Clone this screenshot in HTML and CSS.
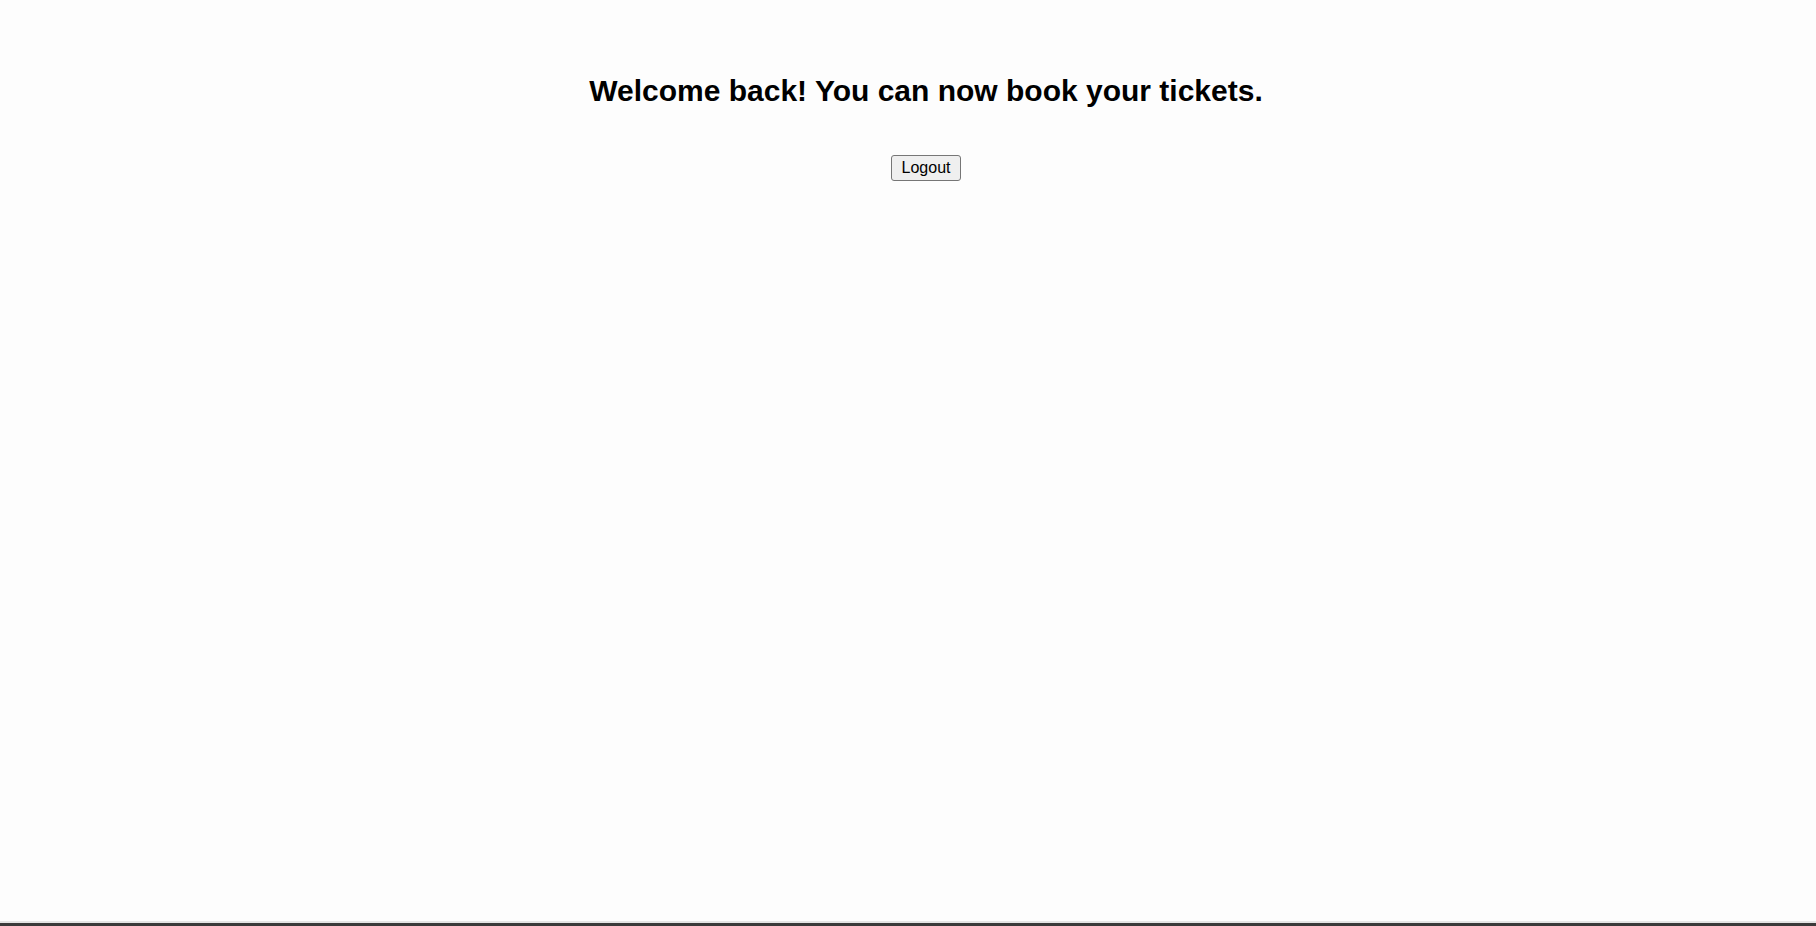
FILE: index.html
```html
<!DOCTYPE html>
<html lang="en">
<head>
<meta charset="utf-8">
<title>Welcome</title>
<link rel="stylesheet" href="styles.css">
</head>
<body>
<main class="page">
  <div class="content">
    <h1 class="title">Welcome back! You can now book your tickets.</h1>
    <button class="logout" type="button">Logout</button>
  </div>
  <div class="frame-edge"></div>
</main>
</body>
</html>
```

FILE: styles.css
```css
html, body {
  margin: 0;
  padding: 0;
  height: 100%;
}
body {
  background: #fdfdfd;
  font-family: "Liberation Sans", Arial, sans-serif;
  color: #000;
}
.page {
  height: 100vh;
  display: flex;
  flex-direction: column;
}
.content {
  flex: 1;
  text-align: center;
  padding-left: 36px;
  padding-top: 1px;
}
.title {
  font-size: 30px;
  font-weight: bold;
  margin: 73px 0 47px;
}
.logout {
  font-family: "Liberation Sans", Arial, sans-serif;
  font-size: 16px;
  padding: 3px 10px;
  background: #efefef;
  border: 1px solid #767676;
  border-radius: 3px;
  color: #000;
}
.frame-edge {
  height: 3px;
  border-top: 2px solid #e4e4e4;
  background: #3a3a3a;
}
```
